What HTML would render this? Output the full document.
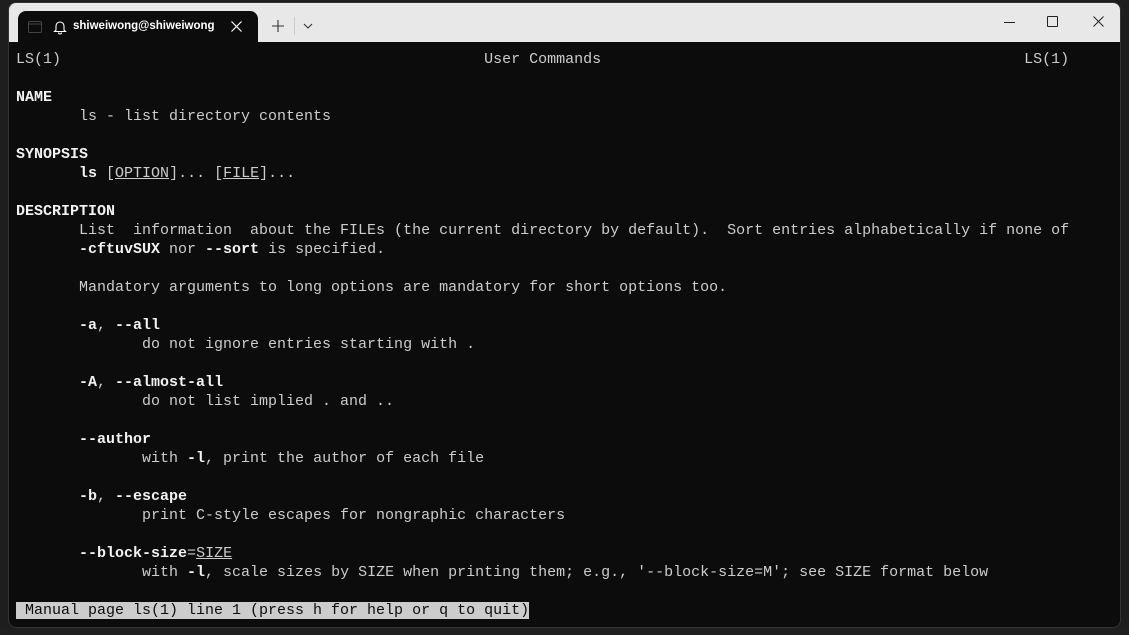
<!DOCTYPE html>
<html><head><meta charset="utf-8"><style>
*{margin:0;padding:0;box-sizing:border-box}
html,body{width:1129px;height:635px;overflow:hidden;background:#1e1e1e}
.win{position:absolute;left:8px;top:2px;width:1113px;height:626px;background:#0c0c0c;border-radius:8px;overflow:hidden;border:1px solid #333}
.title{position:absolute;left:0;top:0;width:100%;height:39px;background:#e8e8e8}
.tab{position:absolute;left:9px;top:8px;width:240px;height:32px;background:#0c0c0c;border-radius:8px 8px 0 0;color:#fff;font:600 11.5px "Liberation Sans",sans-serif}
.term{position:absolute;left:7px;top:47px;font:15px/19px "Liberation Mono",monospace;color:#cccccc;white-space:pre}
b{color:#f2f2f2;font-weight:bold}
u{text-decoration:underline}
.st{background:#cccccc;color:#0c0c0c}
.btm{position:absolute;left:0;top:628px;width:1129px;height:7px;background:#1f1f1f}
</style></head><body>
<div class="btm"></div>
<div class="win">
<div class="title">
<div class="tab">
<svg style="position:absolute;left:9px;top:8px" width="16" height="16" viewBox="0 0 16 16"><rect x="1.5" y="2.5" width="13" height="11" rx="1.5" fill="none" stroke="#444"/><line x1="1.5" y1="5" x2="14.5" y2="5" stroke="#444"/></svg>
<svg style="position:absolute;left:35px;top:8px" width="14" height="16" viewBox="0 0 14 16"><path d="M3 11V7a4 4 0 0 1 8 0v4l1.5 1.5h-11z M5.5 13.5a1.5 1.5 0 0 0 3 0" fill="none" stroke="#fff" stroke-width="1.1"/></svg>
<span style="position:absolute;left:55px;top:9px">shiweiwong@shiweiwong</span>
<svg style="position:absolute;left:213px;top:10px" width="11" height="11" viewBox="0 0 11 11"><path d="M0.5 0.5L10.5 10.5M10.5 0.5L0.5 10.5" stroke="#fff" stroke-width="1.2"/></svg>
</div>
<svg style="position:absolute;left:263px;top:17px" width="12" height="12" viewBox="0 0 12 12"><path d="M6 0V12M0 6H12" stroke="#333" stroke-width="1.1"/></svg>
<div style="position:absolute;left:285px;top:14px;width:1px;height:18px;background:#ccc"></div>
<svg style="position:absolute;left:294px;top:20px" width="10" height="6" viewBox="0 0 10 6"><path d="M1 1L5 5L9 1" stroke="#333" fill="none" stroke-width="1.1"/></svg>
<div style="position:absolute;left:995px;top:19px;width:11px;height:1px;background:#222"></div>
<div style="position:absolute;left:1038px;top:13px;width:11px;height:11px;border:1px solid #222;border-radius:1px"></div>
<svg style="position:absolute;left:1084px;top:13px" width="11" height="11" viewBox="0 0 11 11"><path d="M0.5 0.5L10.5 10.5M10.5 0.5L0.5 10.5" stroke="#222" stroke-width="1"/></svg>
</div>
<div class="term">LS(1)                                               User Commands                                               LS(1)

<b>NAME</b>
       ls - list directory contents

<b>SYNOPSIS</b>
       <b>ls</b> [<u>OPTION</u>]... [<u>FILE</u>]...

<b>DESCRIPTION</b>
       List  information  about the FILEs (the current directory by default).  Sort entries alphabetically if none of
       <b>-cftuvSUX</b> nor <b>--sort</b> is specified.

       Mandatory arguments to long options are mandatory for short options too.

       <b>-a</b>, <b>--all</b>
              do not ignore entries starting with .

       <b>-A</b>, <b>--almost-all</b>
              do not list implied . and ..

       <b>--author</b>
              with <b>-l</b>, print the author of each file

       <b>-b</b>, <b>--escape</b>
              print C-style escapes for nongraphic characters

       <b>--block-size</b>=<u>SIZE</u>
              with <b>-l</b>, scale sizes by SIZE when printing them; e.g., '--block-size=M'; see SIZE format below

<span class="st"> Manual page ls(1) line 1 (press h for help or q to quit)</span></div>
</div>
</body></html>
